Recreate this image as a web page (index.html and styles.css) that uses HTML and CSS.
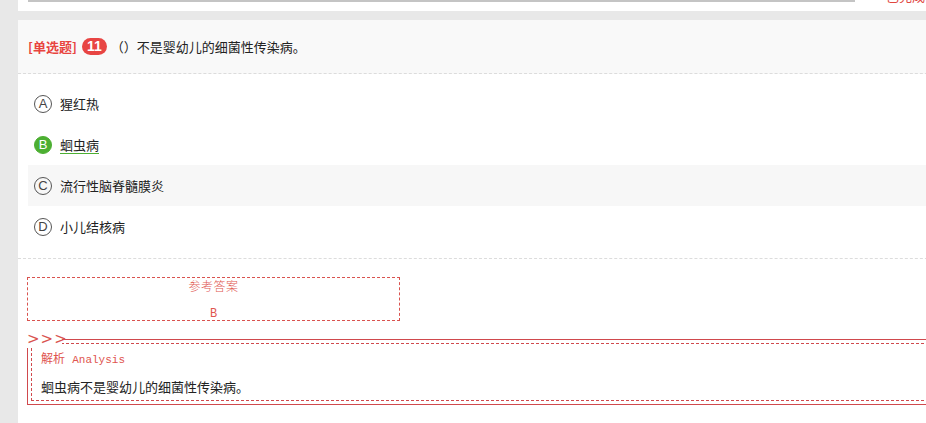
FILE: index.html
```html
<!DOCTYPE html>
<html lang="zh-CN">
<head>
<meta charset="utf-8">
<title>单选题</title>
<link rel="stylesheet" href="styles.css">
</head>
<body>
<div class="page">
  <div class="top-card">
    <div class="top-bar"></div>
    <div class="top-status">已完成</div>
  </div>
  <div class="q-card">
    <div class="q-head">
      <span class="q-type">[单选题]</span>
      <span class="q-num">11</span>
      <span class="q-text">（）不是婴幼儿的细菌性传染病。</span>
    </div>
    <div class="options">
      <div class="opt"><span class="mark">A</span><span class="opt-text">猩红热</span></div>
      <div class="opt"><span class="mark mark-right">B</span><span class="opt-text opt-right">蛔虫病</span></div>
      <div class="opt opt-hover"><span class="mark">C</span><span class="opt-text">流行性脑脊髓膜炎</span></div>
      <div class="opt"><span class="mark">D</span><span class="opt-text">小儿结核病</span></div>
    </div>
    <div class="answer-area">
      <div class="answer-box">
        <div class="answer-title">参考答案</div>
        <div class="answer-value">B</div>
      </div>
      <div class="analysis">
        <div class="analysis-label">&gt;&gt;&gt;</div>
        <div class="analysis-inner">
          <div class="analysis-title">解析 <span class="en">Analysis</span></div>
          <div class="analysis-text">蛔虫病不是婴幼儿的细菌性传染病。</div>
        </div>
      </div>
    </div>
  </div>
</div>
</body>
</html>
```
FILE: styles.css
```css
html, body {
  margin: 0;
  padding: 0;
  overflow: hidden;
}
body {
  background: #e8e8e8;
  font-family: "Noto Sans CJK SC", "Noto Sans", sans-serif;
  color: #222;
  font-size: 13px;
}
.page {
  margin-left: 18px;
  width: 960px;
}
.top-card {
  height: 11px;
  background: #fff;
  overflow: hidden;
  display: flex;
  align-items: flex-start;
  padding-left: 10px;
}
.top-bar {
  width: 827px;
  height: 2px;
  background: #c4c4c4;
}
.top-status {
  margin-left: 31px;
  margin-top: -12px;
  font-size: 13px;
  line-height: 16px;
  color: #e0463f;
}
.q-card {
  margin-top: 9px;
  background: #fff;
  height: 420px;
}
.q-head {
  height: 53px;
  background: #f9f9f9;
  border-bottom: 1px dashed #dcdcdc;
  display: flex;
  align-items: center;
  padding: 0 10px;
  line-height: 18px;
}
.q-type {
  color: #e8443f;
  font-weight: bold;
  font-size: 13px;
}
.q-num {
  margin-left: 5px;
  display: inline-flex;
  align-items: center;
  justify-content: center;
  width: 25px;
  height: 17px;
  border-radius: 9px;
  background: #e84543;
  color: #fff;
  font-weight: bold;
  font-size: 14px;
  line-height: 17px;
  font-family: "Liberation Sans", "Noto Sans CJK SC", sans-serif;
}
.q-text {
  margin-left: 4px;
  color: #222;
}
.options {
  padding: 9px 0 11px 10px;
  border-bottom: 1px dashed #dcdcdc;
}
.opt {
  height: 41px;
  display: flex;
  align-items: center;
  padding-left: 6px;
  gap: 8px;
}
.opt-hover {
  background: #f7f7f7;
}
.mark {
  box-sizing: border-box;
  width: 18px;
  height: 18px;
  border: 1px solid #555;
  border-radius: 50%;
  display: inline-flex;
  align-items: center;
  justify-content: center;
  font-family: "Liberation Sans", sans-serif;
  font-size: 13px;
  color: #444;
  line-height: 1;
}
.mark-right {
  background: #4caf32;
  border-color: #4caf32;
  color: #fff;
}
.opt-text {
  line-height: 15px;
  color: #222;
}
.opt-right {
  border-bottom: 1px solid #4caf32;
  padding-bottom: 1px;
  margin-top: 2px;
}
.answer-area {
  padding: 18px 0 0 9px;
}
.answer-box {
  box-sizing: border-box;
  width: 373px;
  height: 44px;
  border: 1px dashed #d9534f;
  overflow: hidden;
  text-align: center;
  color: #e0554f;
  padding-top: 2px;
}
.answer-title {
  font-size: 12px;
  line-height: 16px;
  letter-spacing: 0.5px;
  font-family: "Liberation Mono", "Noto Sans CJK SC", monospace;
  font-weight: 300;
}
.answer-value {
  margin-top: 10px;
  font-size: 12px;
  line-height: 16px;
  font-family: "Liberation Mono", monospace;
}
.analysis {
  position: relative;
  margin-top: 18px;
  border: 1px solid #d0494d;
  padding: 3px;
}
.analysis-label {
  position: absolute;
  top: -10px;
  left: -1px;
  width: 35px;
  height: 18px;
  background: #fff;
  color: #d9534f;
  font-family: "DejaVu Sans", sans-serif;
  font-size: 15px;
  line-height: 18px;
  letter-spacing: 1px;
}
.analysis-inner {
  border: 1px dashed #d0494d;
  padding: 7px 9px 3px;
}
.analysis-title {
  color: #e0554f;
  font-size: 12px;
  line-height: 18px;
  font-family: "Liberation Mono", "Noto Sans CJK SC", monospace;
}
.analysis-title .en {
  font-size: 11px;
}
.analysis-text {
  margin-top: 8px;
  font-size: 13px;
  line-height: 20px;
  color: #222;
}
```
